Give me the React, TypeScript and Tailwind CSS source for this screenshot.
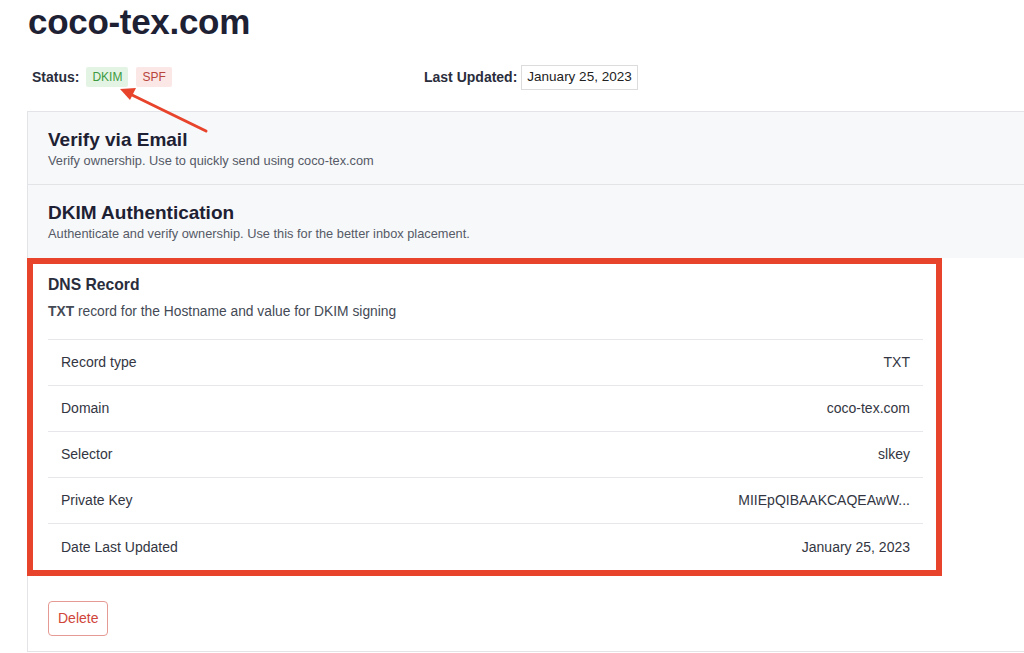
import React from "react";

const rows = [
  { label: "Record type", value: "TXT" },
  { label: "Domain", value: "coco-tex.com" },
  { label: "Selector", value: "slkey" },
  { label: "Private Key", value: "MIIEpQIBAAKCAQEAwW..." },
  { label: "Date Last Updated", value: "January 25, 2023" },
];

export default function App() {
  return (
    <div
      className="relative w-[1024px] h-[653px] overflow-hidden bg-white text-[#23263a]"
      style={{ fontFamily: '"Liberation Sans", Arial, sans-serif' }}
    >
      {/* Header */}
      <div className="pl-[28px] pt-[2px]">
        <h1 className="text-[35px] leading-[40px] font-bold tracking-[-0.3px] text-[#1d2133]">
          coco-tex.com
        </h1>
      </div>

      <div className="flex items-center h-[26px] mt-[22px] pl-[32px]">
        <div className="flex items-center w-[392px]">
          <span className="text-[14px] font-bold text-[#2a2d3c]">Status:</span>
          <span className="ml-[7px] h-[20px] px-[6px] flex items-center bg-[#e4f4e4] text-[#3d9a41] text-[12px] rounded-[2px]">
            DKIM
          </span>
          <span className="ml-[8px] h-[20px] px-[6px] flex items-center bg-[#fbe7e6] text-[#b8453c] text-[12px] rounded-[2px]">
            SPF
          </span>
        </div>
        <span className="text-[14px] font-bold text-[#2a2d3c]">Last Updated:</span>
        <span className="ml-[4px] h-[25px] px-[5px] flex items-center border border-[#dcdcdc] text-[13.5px] text-[#222]">
          January 25, 2023
        </span>
      </div>

      {/* Card */}
      <div className="ml-[27px] mt-[21px] border-l border-t border-b border-[#e3e4e8]">
        <div className="bg-[#f7f8fa] pl-[20px] pt-[16px] pb-[14px] border-b border-[#e3e4e8]">
          <h2 className="text-[19px] leading-[24px] font-bold text-[#1d2133]">Verify via Email</h2>
          <p className="text-[12.8px] leading-[18px] text-[#555a66]">
            Verify ownership. Use to quickly send using coco-tex.com
          </p>
        </div>
        <div className="bg-[#f7f8fa] pl-[20px] pt-[16px] pb-[15px]">
          <h2 className="text-[19px] leading-[24px] font-bold text-[#1d2133]">DKIM Authentication</h2>
          <p className="text-[12.8px] leading-[18px] text-[#555a66]">
            Authenticate and verify ownership. Use this for the better inbox placement.
          </p>
        </div>

        <div className="bg-white">
          <div className="-ml-px w-[915px] border-[6px] border-[#e8442c] pl-[15px] pr-[13px] pt-[11px]">
            <h3 className="text-[15.7px] leading-[20px] font-bold text-[#2a2d3c]">DNS Record</h3>
            <p className="mt-[7px] text-[13.8px] leading-[20px] text-[#444a55]">
              <span className="font-bold">TXT</span> record for the Hostname and value for DKIM signing
            </p>
            <div className="mt-[17px] border-t border-[#e6e7ea]">
              {rows.map((r, i) => (
                <div
                  key={r.label}
                  className={`flex items-center justify-between h-[46px] px-[13px] text-[14px] text-[#333642] ${
                    i < rows.length - 1 ? "border-b border-[#e6e7ea]" : ""
                  }`}
                >
                  <span>{r.label}</span>
                  <span>{r.value}</span>
                </div>
              ))}
            </div>
          </div>
          <div className="pl-[20px] pt-[25px] pb-[15px]">
            <button className="h-[35px] px-[9px] border border-[#e59b93] rounded-[4px] text-[14px] text-[#d0453a] bg-white">
              Delete
            </button>
          </div>
        </div>
      </div>

      {/* annotation arrow */}
      <svg className="absolute left-0 top-0 pointer-events-none" width="1024" height="653">
        <line x1="206" y1="131" x2="130" y2="94" stroke="#e8442c" strokeWidth="3" strokeLinecap="round" />
        <polygon points="120,89 136,88 130,100" fill="#e8442c" />
      </svg>
    </div>
  );
}
